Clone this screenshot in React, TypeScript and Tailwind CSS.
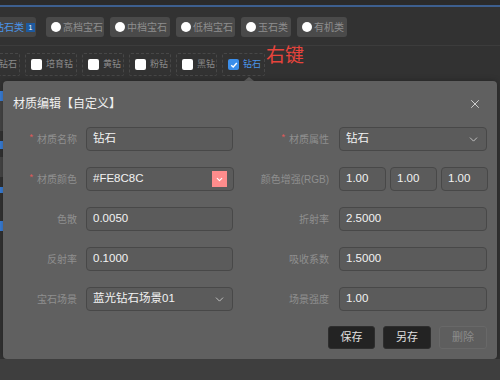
import { ChevronDown, X } from 'lucide-react'

const font = "font-['Liberation_Sans','Noto_Sans_CJK_SC',sans-serif]"

function Tab ({ label, w }: { label: string, w: string }): JSX.Element {
  return (
    <div className={`${w} h-[20px] shrink-0 flex items-center gap-[2px] pl-[5px] rounded-[3px] bg-[#4a4a4a] text-[10px] text-[#8e8e8e]`}>
      <span className="w-[10px] h-[10px] rounded-full bg-white shrink-0" />
      <span>{label}</span>
    </div>
  )
}

function Chip ({ label, w, checked = false }: { label: string, w: string, checked?: boolean }): JSX.Element {
  return (
    <div className={`${w} h-[23px] shrink-0 flex items-center gap-[4px] pl-[5px] border border-dashed border-[#474747] rounded-[2px] text-[9px] ${checked ? 'text-[#4a95ea]' : 'text-[#8a8a8a]'}`}>
      {checked
        ? (
          <span className="w-[11px] h-[11px] rounded-[2px] bg-[#3b8eea] shrink-0 flex items-center justify-center">
            <svg width="8" height="8" viewBox="0 0 8 8"><path d="M1.2 4.2 L3.2 6 L6.8 2" stroke="white" strokeWidth="1.4" fill="none" /></svg>
          </span>
          )
        : <span className="w-[11px] h-[11px] rounded-[2px] bg-white shrink-0" />}
      <span>{label}</span>
    </div>
  )
}

function Label ({ text, req = false, w }: { text: string, req?: boolean, w: string }): JSX.Element {
  return (
    <div className={`${w} shrink-0 flex justify-end items-center text-[10px] text-[#8f8f8f]`}>
      {req && <span className="text-[#e35a5a] text-[9px] mr-[4px] -mt-[3px]">*</span>}
      <span>{text}</span>
    </div>
  )
}

function Field ({ value, w, children }: { value: string, w: string, children?: React.ReactNode }): JSX.Element {
  return (
    <div className={`${w} h-[24px] shrink-0 flex items-center justify-between pl-[6px] pr-[6px] rounded-[4px] border border-[#484848] bg-[#5b5b5b] text-[11.5px] text-[#f2f2f2]`}>
      <span>{value}</span>
      {children}
    </div>
  )
}

const chevron = <ChevronDown size={13} strokeWidth={1.5} color="#d6d6d6" />

function App (): JSX.Element {
  return (
    <div className={`w-[500px] h-[380px] overflow-hidden bg-[#323232] flex flex-col ${font}`}>
      <div className="h-[5px] bg-[#2b2b2b]" />
      <div className="h-[2px] bg-[#3d5f8f]" />

      <div className="mt-[10px] flex gap-[6px] ml-[-23px]">
        <div className="w-[59px] h-[20px] shrink-0 flex items-center gap-[2px] pl-[5px] mr-[4px] rounded-[3px] bg-[#454545] text-[10px] text-[#4a95ea]">
          <span className="w-[10px] h-[10px] rounded-full bg-[#3b8eea] shrink-0" />
          <span>钻石类</span>
          <span className="w-[9px] h-[9px] bg-[#1d5aa0] text-white text-[7px] leading-none flex items-center justify-center">1</span>
        </div>
        <Tab label="高档宝石" w="w-[58px]" />
        <Tab label="中档宝石" w="w-[60px]" />
        <Tab label="低档宝石" w="w-[59px]" />
        <Tab label="玉石类" w="w-[50px]" />
        <Tab label="有机类" w="w-[50px]" />
      </div>

      <div className="mt-[8px] h-px bg-[#3c3c3c]" />

      <div className="mt-[7px] flex items-start gap-[5px] ml-[-22px]">
        <Chip label="钻石" w="w-[42px]" />
        <Chip label="培育钻" w="w-[52px]" />
        <Chip label="黄钻" w="w-[42px]" />
        <Chip label="粉钻" w="w-[42px]" />
        <Chip label="黑钻" w="w-[41px]" />
        <Chip label="钻石" w="w-[43px]" checked />
        <span className="-ml-[4px] -mt-[9px] text-[19px] leading-[24px] text-[#e8443c]">右键</span>
      </div>

      <div className="h-[5px] pl-[244px] flex items-end">
        <div className="w-0 h-0 border-l-[5px] border-r-[5px] border-b-[4px] border-l-transparent border-r-transparent border-b-[#606060]" />
      </div>

      <div className="flex h-[278px]">
        <div className="w-[3px] shrink-0 flex flex-col">
          <div className="h-[10px] mt-[10px] bg-[#3a7fd8]" />
          <div className="h-[30px] bg-[#454545]" />
          <div className="h-[8px] mt-[10px] bg-[#3a7fd8]" />
          <div className="h-[20px] mt-[8px] bg-[#454545]" />
          <div className="h-[6px] mt-[10px] bg-[#3a7fd8]" />
          <div className="h-[10px] mt-[28px] bg-[#3a7fd8]" />
        </div>

        <div className="w-[494px] shrink-0 rounded-[4px] bg-[#606060] shadow-[0_0_6px_rgba(0,0,0,0.3)] flex flex-col">
          <div className="h-[46px] flex items-center justify-between pl-[10px] pr-[15px]">
            <span className="text-[12px] text-[#f0f0f0]">材质编辑【自定义】</span>
            <X size={14} strokeWidth={1.4} color="#e6e6e6" />
          </div>

          <div className="flex flex-col gap-[16px]">
            <div className="flex items-center">
              <Label text="材质名称" req w="w-[74px]" />
              <div className="ml-[9px]"><Field value="钻石" w="w-[147px]" /></div>
              <Label text="材质属性" req w="w-[96px]" />
              <div className="ml-[10px]"><Field value="钻石" w="w-[148px]">{chevron}</Field></div>
            </div>

            <div className="flex items-center">
              <Label text="材质颜色" req w="w-[74px]" />
              <div className="ml-[9px]">
                <Field value="#FE8C8C" w="w-[148px]">
                  <span className="w-[15px] h-[16px] bg-[#fe8c8c] flex items-center justify-center">
                    <ChevronDown size={9} strokeWidth={3} color="white" />
                  </span>
                </Field>
              </div>
              <Label text="颜色增强(RGB)" w="w-[95px]" />
              <div className="ml-[10px] flex gap-[4px]">
                <Field value="1.00" w="w-[47px]" />
                <Field value="1.00" w="w-[47px]" />
                <Field value="1.00" w="w-[47px]" />
              </div>
            </div>

            <div className="flex items-center">
              <Label text="色散" w="w-[74px]" />
              <div className="ml-[9px]"><Field value="0.0050" w="w-[147px]" /></div>
              <Label text="折射率" w="w-[96px]" />
              <div className="ml-[10px]"><Field value="2.5000" w="w-[148px]" /></div>
            </div>

            <div className="flex items-center">
              <Label text="反射率" w="w-[74px]" />
              <div className="ml-[9px]"><Field value="0.1000" w="w-[147px]" /></div>
              <Label text="吸收系数" w="w-[96px]" />
              <div className="ml-[10px]"><Field value="1.5000" w="w-[148px]" /></div>
            </div>

            <div className="flex items-center">
              <Label text="宝石场景" w="w-[74px]" />
              <div className="ml-[9px]"><Field value="蓝光钻石场景01" w="w-[147px]">{chevron}</Field></div>
              <Label text="场景强度" w="w-[96px]" />
              <div className="ml-[10px]"><Field value="1.00" w="w-[148px]" /></div>
            </div>
          </div>

          <div className="mt-[15px] flex justify-end gap-[8px] pr-[10px]">
            <button className="w-[47px] h-[23px] rounded-[3px] bg-[#232323] border border-[#2e2e2e] text-[11px] text-[#e0e0e0]">保存</button>
            <button className="w-[48px] h-[23px] rounded-[3px] bg-[#232323] border border-[#2e2e2e] text-[11px] text-[#e0e0e0]">另存</button>
            <button className="w-[48px] h-[23px] rounded-[3px] bg-[#5e5e5e] border border-[#686868] text-[11px] text-[#8c8c8c]">删除</button>
          </div>
        </div>
      </div>

      <div className="flex-1 bg-[#3e3e3e]" />
    </div>
  )
}

export default App
